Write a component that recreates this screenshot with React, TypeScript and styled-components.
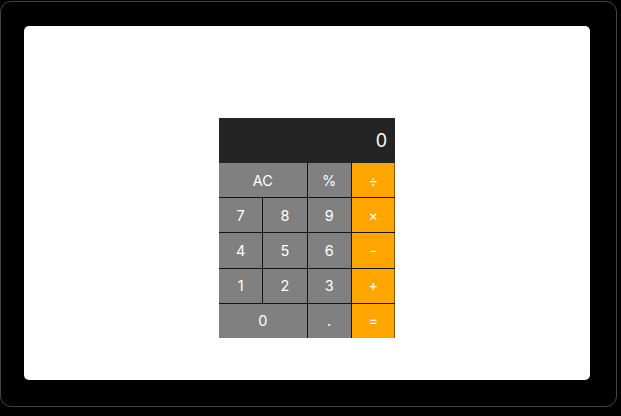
import React from "react";
import styled, { createGlobalStyle } from "styled-components";

const Global = createGlobalStyle`
  html, body { margin: 0; padding: 0; background: #000; }
  body { width: 621px; height: 416px; overflow: hidden; font-family: Inter, "Liberation Sans", Arial, sans-serif; }
`;

const Frame = styled.div`
  box-sizing: border-box;
  margin-top: 1px;
  width: 617px;
  height: 406px;
  border: 1px solid #444;
  border-radius: 11px;
  background: #000;
  padding: 24px 0 0 23px;
`;

const Panel = styled.div`
  width: 566px;
  height: 354px;
  background: #fff;
  border-radius: 5px;
  display: flex;
  justify-content: center;
  padding-top: 92px;
  box-sizing: border-box;
`;

const Calc = styled.div`
  width: 176px;
  display: flex;
  flex-direction: column;
  background: #000;
`;

const Display = styled.div`
  height: 45px;
  background: #242424;
  color: #fff;
  font-size: 18px;
  display: flex;
  align-items: center;
  justify-content: flex-end;
  padding-right: 8px;
`;

const Keys = styled.div`
  display: grid;
  grid-template-columns: repeat(4, 1fr);
  grid-auto-rows: 34.2px;
  gap: 1px;
  background: #141414;
`;

const Key = styled.button<{ $wide?: boolean; $op?: boolean }>`
  grid-column: span ${(p) => (p.$wide ? 2 : 1)};
  border: 0;
  margin: 0;
  padding: 0;
  background: ${(p) => (p.$op ? "#ffa500" : "#808080")};
  color: #fff;
  font-family: Inter, "Liberation Sans", Arial, sans-serif;
  font-size: 14.5px;
  display: flex;
  align-items: center;
  justify-content: center;
  box-shadow: ${(p) => (p.$op ? "inset -1px 0 0 rgba(0,0,0,0.45)" : "none")};
`;

const rows: { label: string; wide?: boolean; op?: boolean }[][] = [
  [{ label: "AC", wide: true }, { label: "%" }, { label: "÷", op: true }],
  [{ label: "7" }, { label: "8" }, { label: "9" }, { label: "×", op: true }],
  [{ label: "4" }, { label: "5" }, { label: "6" }, { label: "-", op: true }],
  [{ label: "1" }, { label: "2" }, { label: "3" }, { label: "+", op: true }],
  [{ label: "0", wide: true }, { label: "." }, { label: "=", op: true }],
];

export default function App() {
  return (
    <>
      <Global />
      <Frame>
        <Panel>
          <div>
            <Calc>
              <Display>0</Display>
              <Keys>
                {rows.flat().map((k, i) => (
                  <Key key={i} $wide={k.wide} $op={k.op}>
                    {k.label}
                  </Key>
                ))}
              </Keys>
            </Calc>
          </div>
        </Panel>
      </Frame>
    </>
  );
}
